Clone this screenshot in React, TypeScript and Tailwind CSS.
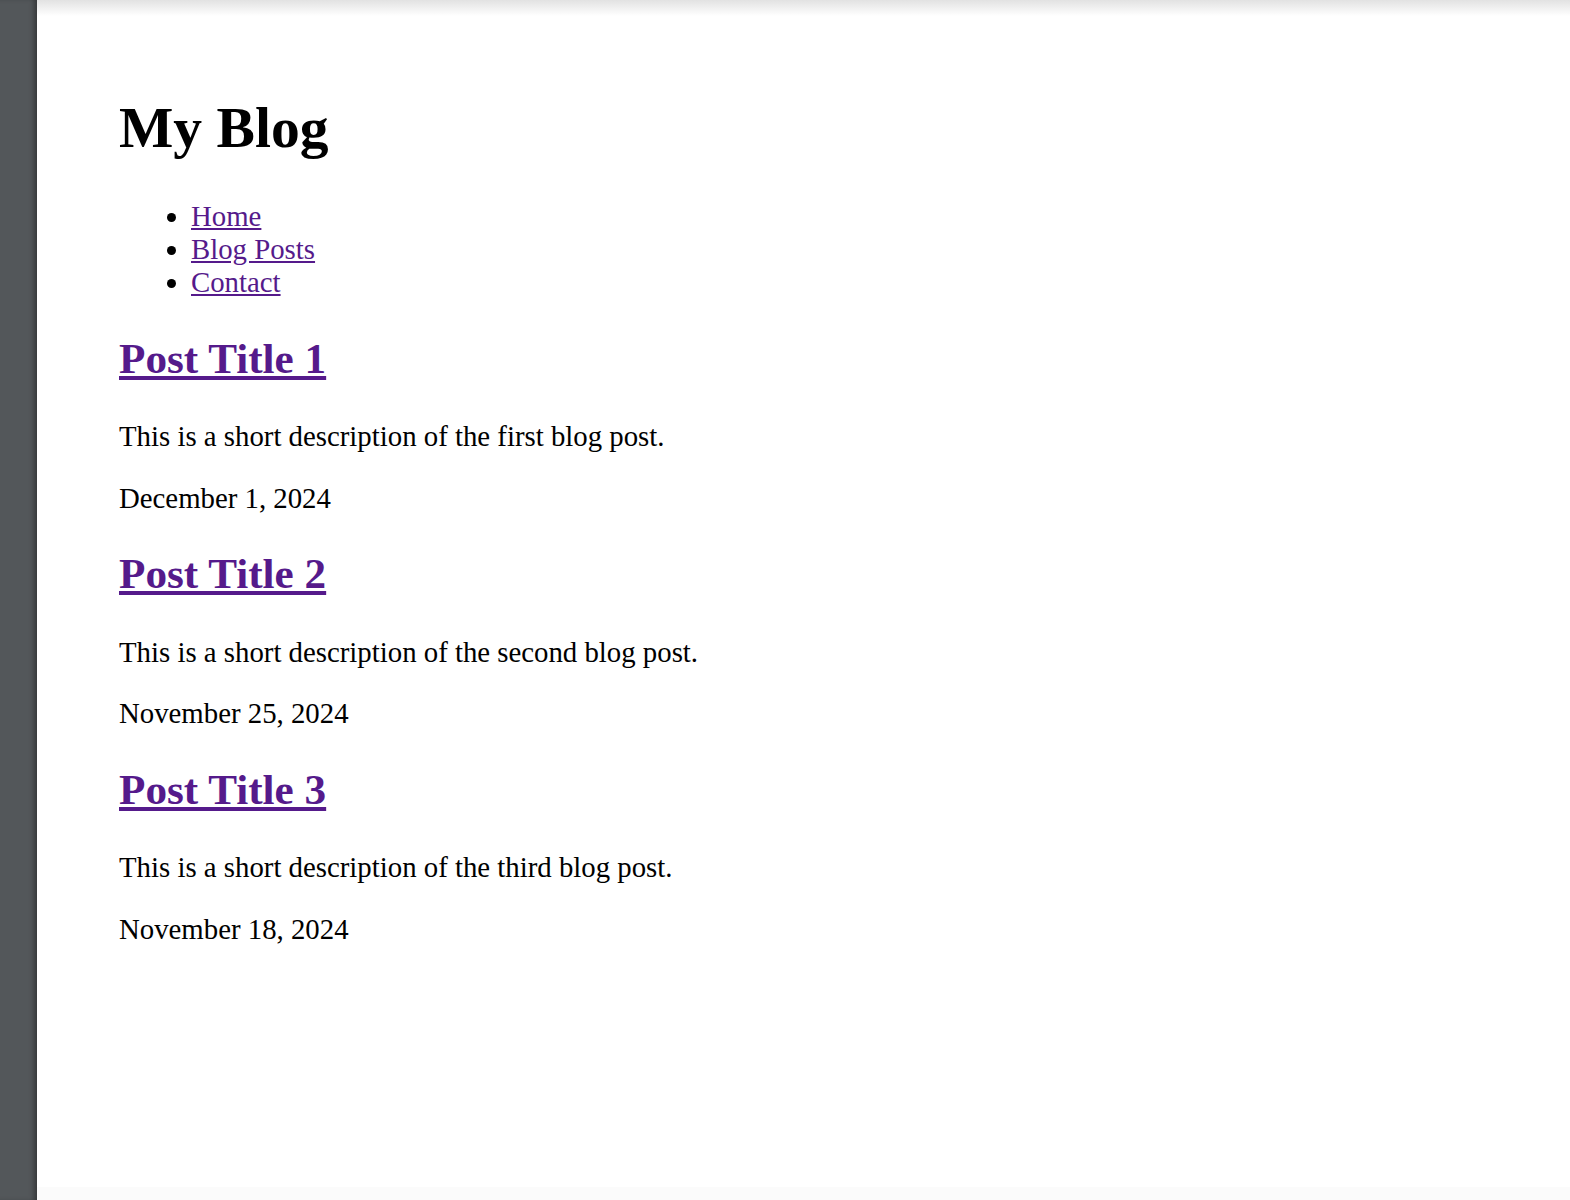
export default function App() {
  const posts = [
    { id: 1, title: "Post Title 1", desc: "This is a short description of the first blog post.", date: "December 1, 2024" },
    { id: 2, title: "Post Title 2", desc: "This is a short description of the second blog post.", date: "November 25, 2024" },
    { id: 3, title: "Post Title 3", desc: "This is a short description of the third blog post.", date: "November 18, 2024" },
  ];

  return (
    <div className="flex h-[1200px] w-full overflow-hidden bg-white" style={{ fontFamily: '"Liberation Serif", "Times New Roman", serif' }}>
      {/* Side strip */}
      <div className="w-[37px] shrink-0 bg-[#53575a] shadow-[inset_-5px_0_5px_-2px_rgba(0,0,0,0.35)]" />

      {/* Page */}
      <div className="relative flex-1 bg-white">
        <div className="pointer-events-none absolute inset-x-0 top-0 h-[16px] bg-gradient-to-b from-[#e2e2e2] to-white/0" />
        <div className="pointer-events-none absolute inset-x-0 bottom-0 h-[13px] bg-[#fbfbfb]" />

        <div className="relative pt-[57px] pl-[82px] text-black">
          <h1 className="text-[57.6px] font-bold leading-[1.15] mt-[38px] mb-[38.6px]">My Blog</h1>

          <ul className="list-disc pl-[72px] text-[28.8px] leading-[1.15] mb-[28.8px]">
            <li><a href="#" className="text-[#551a8b] underline">Home</a></li>
            <li><a href="#" className="text-[#551a8b] underline">Blog Posts</a></li>
            <li><a href="#" className="text-[#551a8b] underline">Contact</a></li>
          </ul>

          {posts.map((p) => (
            <article key={p.id}>
              <h2 className="text-[43.2px] font-bold leading-[1.15] mt-[34.5px] mb-[36.5px]">
                <a href="#" className="text-[#551a8b] underline">{p.title}</a>
              </h2>
              <p className="text-[28.8px] leading-[1.15] my-[28.8px]">{p.desc}</p>
              <p className="text-[28.8px] leading-[1.15] my-[28.8px]">{p.date}</p>
            </article>
          ))}
        </div>
      </div>
    </div>
  );
}
